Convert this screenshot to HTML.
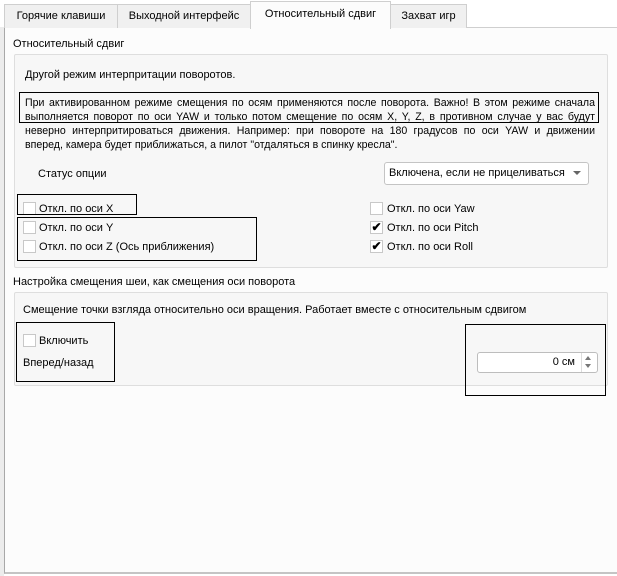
<!DOCTYPE html>
<html><head><meta charset="utf-8"><style>
*{margin:0;padding:0;box-sizing:border-box}
body{width:617px;height:576px;background:#fff;font-family:"Liberation Sans",sans-serif;font-size:11px;color:#000;position:relative;overflow:hidden}
.a{position:absolute;white-space:nowrap}
.tab{position:absolute;top:4px;height:24px;background:#f0f0f0;border:1px solid #cfcfcf;border-bottom:none;text-align:center;line-height:22px}
.cb{position:absolute;width:13px;height:13px;background:#fff;border:1px solid #c8c8c8}
.bk{position:absolute;border:1px solid #000}
.gb{position:absolute;background:#f7f7f7;border:1px solid #dedede;border-radius:2px}
.ln{display:block;text-align:justify;text-align-last:justify;white-space:nowrap;height:14px}
</style></head><body>
<div class="a" style="left:0;top:27px;width:4px;height:549px;background:#ececec"></div>
<div class="a" style="left:4px;top:27px;width:613px;height:547px;background:#fcfcfc;border-left:1px solid #a8a8a8;border-top:1px solid #cfcfcf;border-bottom:2px solid #c4c4c4"></div>
<div class="tab" style="left:4px;width:114px">Горячие клавиши</div>
<div class="tab" style="left:117px;width:134px">Выходной интерфейс</div>
<div class="tab" style="left:250px;width:141px;top:1px;height:28px;background:#fcfcfc;line-height:24px">Относительный сдвиг</div>
<div class="tab" style="left:390px;width:77px">Захват игр</div>

<div class="a" style="left:13px;top:38px">Относительный сдвиг</div>
<div class="gb" style="left:14px;top:54px;width:594px;height:214px"></div>
<div class="a" style="left:25px;top:69px">Другой режим интерпритации поворотов.</div>
<div class="a" style="left:25px;top:96px;width:570px;line-height:14px;font-size:10.6px">
<span class="ln">При активированном режиме смещения по осям применяются после поворота. Важно! В этом режиме сначала</span>
<span class="ln">выполняется поворот по оси YAW и только потом смещение по осям X, Y, Z, в противном случае у вас будут</span>
<span class="ln">неверно интерпритироваться движения. Например: при повороте на 180 градусов по оси YAW и движении</span>
<span style="display:block">вперед, камера будет приближаться, а пилот "отдаляться в спинку кресла".</span>
</div>
<div class="bk" style="left:19px;top:92px;width:580px;height:31px"></div>

<div class="a" style="left:38px;top:168px">Статус опции</div>
<div class="a" style="left:384px;top:162px;width:205px;height:23px;background:#fff;border:1px solid #c4c4c4;border-radius:3px;padding-left:4px;line-height:21px">Включена, если не прицеливаться</div>
<div class="a" style="left:573px;top:171px;width:0;height:0;border-left:4px solid transparent;border-right:4px solid transparent;border-top:4px solid #666"></div>

<div class="cb" style="left:23px;top:202px"></div><div class="a" style="left:39px;top:203px">Откл. по оси X</div>
<div class="bk" style="left:17px;top:194px;width:120px;height:21px"></div>
<div class="cb" style="left:23px;top:221px"></div><div class="a" style="left:39px;top:222px">Откл. по оси Y</div>
<div class="cb" style="left:23px;top:240px"></div><div class="a" style="left:39px;top:241px">Откл. по оси Z (Ось приближения)</div>
<div class="bk" style="left:17px;top:217px;width:240px;height:44px"></div>

<div class="cb" style="left:370px;top:202px"></div><div class="a" style="left:387px;top:203px">Откл. по оси Yaw</div>
<div class="cb" style="left:370px;top:221px;font-size:12px;line-height:11px;text-align:center;font-weight:bold">✔</div><div class="a" style="left:387px;top:222px">Откл. по оси Pitch</div>
<div class="cb" style="left:370px;top:240px;font-size:12px;line-height:11px;text-align:center;font-weight:bold">✔</div><div class="a" style="left:387px;top:241px">Откл. по оси Roll</div>

<div class="a" style="left:13px;top:276px">Настройка смещения шеи, как смещения оси поворота</div>
<div class="gb" style="left:14px;top:292px;width:594px;height:94px"></div>
<div class="a" style="left:23px;top:304px">Смещение точки взгляда относительно оси вращения. Работает вместе с относительным сдвигом</div>
<div class="cb" style="left:23px;top:334px"></div><div class="a" style="left:39px;top:335px">Включить</div>
<div class="a" style="left:23px;top:357px">Вперед/назад</div>
<div class="bk" style="left:16px;top:322px;width:99px;height:60px"></div>
<div class="a" style="left:477px;top:352px;width:121px;height:21px;background:#fff;border:1px solid #bdbdbd;border-radius:3px;padding-right:22px;text-align:right;line-height:19px">0 см</div>
<div class="a" style="left:581px;top:353px;width:16px;height:19px;border-left:1px solid #ddd"></div>
<div class="a" style="left:585px;top:356px;border-left:3px solid transparent;border-right:3px solid transparent;border-bottom:4px solid #777"></div>
<div class="a" style="left:585px;top:364px;border-left:3px solid transparent;border-right:3px solid transparent;border-top:4px solid #777"></div>
<div class="bk" style="left:465px;top:324px;width:141px;height:72px"></div>
</body></html>
